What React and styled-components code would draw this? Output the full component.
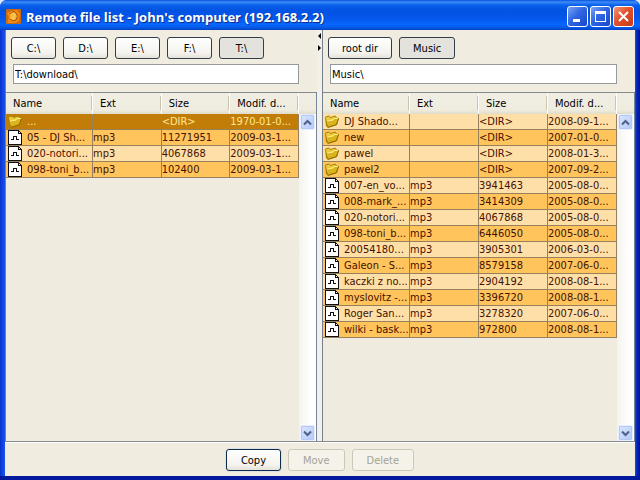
import React from 'react';
import styled, { createGlobalStyle, css } from 'styled-components';

const GlobalStyle = createGlobalStyle`
  * { box-sizing: border-box; }
  body {
    margin: 0;
    background: #dfe6f5;
    color: #000;
    font-family: "DejaVu Sans Condensed", "Noto Sans", sans-serif;
    font-size: 11px;
    line-height: 15px;
  }
  button, input { font: inherit; color: inherit; }
`;

const Window = styled.div`
  display: flex;
  flex-direction: column;
  min-height: 100vh;
  padding: 0 5px 4px;
  border-radius: 7px 7px 0 0;
  background: linear-gradient(90deg, #0a2fd0 0, #1450e4 4px, #1450e4 calc(100% - 5px), #0424b4 calc(100% - 3px), #00139c 100%);
  box-shadow: inset 0 -4px #02199c;
`;

const TitleBar = styled.header`
  display: flex;
  align-items: center;
  gap: 5px;
  height: 30px;
  margin: 0 -5px;
  padding: 3px 6px 0;
  border-radius: 7px 7px 0 0;
  background: linear-gradient(180deg, #0a4fdc 0, #3c8cf8 2px, #0a62ee 5px, #0253e2 10px, #0556ea 18px, #0668fd 25px, #0455df 28px, #0340c0 100%);
`;

const Title = styled.h1`
  flex: 1;
  min-width: 0;
  margin: 0;
  overflow: hidden;
  color: #fff;
  font-family: "Open Sans", "Noto Sans", sans-serif;
  font-size: 13px;
  font-weight: 700;
  line-height: 18px;
  white-space: nowrap;
  text-shadow: 1px 1px #0a2f94;
`;

const Caption = styled.div`
  display: flex;
  gap: 2px;
`;

const CaptionButton = styled.button`
  display: grid;
  place-items: center;
  width: 21px;
  height: 21px;
  padding: 0;
  border: 1px solid #fff;
  border-radius: 3px;
  background: ${(p) => (p.$close
    ? 'linear-gradient(135deg, #f0997c, #e0512c 45%, #c63a16)'
    : 'linear-gradient(135deg, #7ba4f4, #2f66e2 45%, #1748cc)')};
`;

const Panes = styled.main`
  flex: 1;
  display: grid;
  grid-template-columns: minmax(0, 312fr) 5px minmax(0, 313fr);
  background: #f0ede0;
  border-bottom: 1px solid #858b8c;
`;

const Pane = styled.section`
  display: flex;
  flex-direction: column;
  min-width: 0;
  border-left: 1px solid #74808c;
`;

const Splitter = styled.div`
  display: flex;
  flex-direction: column;
  gap: 6px;
  padding: 3px 1px 0;
  background: #f2f0e8;
`;

const Toolbar = styled.nav`
  display: flex;
  gap: 7px;
  padding: 7px 5px 5px;
`;

const Button = styled.button`
  height: 22px;
  min-width: 45px;
  padding: 0 13px;
  border: 1px solid #343e48;
  border-radius: 3px;
  background: linear-gradient(180deg, #fff, #f4f3ee 75%, #e4e1d6);
  text-align: center;
  white-space: nowrap;
  ${(p) => p.$pressed && css`background: #e3e2dd;`}
  ${(p) => p.$primary && css`border-color: #0c2c50; box-shadow: 0 0 0 1px #dfe2e0;`}
  &:disabled {
    border-color: #cbc8b8;
    background: #f5f3e9;
    color: #a5a295;
  }
`;

const PathInput = styled.input`
  height: 20px;
  margin: 0 18px 8px 7px;
  padding: 0 1px;
  border: 1px solid #93999c;
  border-radius: 0;
  background: #fff;
`;

const FileArea = styled.div`
  flex: 1;
  display: grid;
  grid-template-columns: minmax(0, 1fr) 17px;
  border-top: 1px solid #858b8c;
  border-right: 1px solid #74869c;
`;

const Listing = styled.div`
  background: #efecdf;
`;

const Table = styled.table`
  width: 100%;
  table-layout: fixed;
  border-collapse: separate;
  border-spacing: 0;
`;

const NameCol = styled.col`
  width: 87px;
`;

const HeadCell = styled.th`
  height: 21px;
  padding: 0 0 0 7px;
  overflow: hidden;
  border-right: 1px solid #fff;
  background:
    linear-gradient(#c9c5b4, #c9c5b4) right 3px / 1px 14px no-repeat padding-box,
    linear-gradient(180deg, #f0eee3 0, #efecdf 17px, #e0dccb 100%);
  font-weight: 400;
  text-align: left;
  white-space: nowrap;
`;

const Row = styled.tr`
  background: #ffdfa8;
  color: #461200;
  &:nth-child(even) { background: #ffc45c; }
  ${(p) => p.$selected && css`
    && { background: #c27d08; color: #ffe892; }
  `}
`;

const Cell = styled.td`
  height: 16px;
  padding: 0;
  overflow: hidden;
  border-right: 1px solid #96815c;
  border-bottom: 1px solid #96815c;
  white-space: nowrap;
`;

const FileName = styled.span`
  display: flex;
  align-items: center;
  gap: 5px;
  height: 15px;
  padding-left: 1px;
`;

const ScrollColumn = styled.div`
  display: flex;
  flex-direction: column;
`;

const ScrollCorner = styled.div`
  height: 21px;
  background: linear-gradient(180deg, #f0eee3 0, #efecdf 17px, #e0dccb 100%);
`;

const ScrollTrack = styled.div`
  flex: 1;
  display: flex;
  flex-direction: column;
  justify-content: space-between;
  padding: 0 1px;
  background: linear-gradient(90deg, #f4f3ee, #fff 70%);
`;

const ScrollButton = styled.button`
  display: grid;
  place-items: center;
  width: 15px;
  height: 16px;
  padding: 0;
  border: 1px solid #e6eeff;
  border-radius: 2px;
  background: linear-gradient(135deg, #dbe6ff, #b4c9f8);
  box-shadow: inset 0 0 0 1px #b4c8f4;
`;

const Footer = styled.footer`
  display: flex;
  justify-content: center;
  gap: 7px;
  height: 34px;
  padding-top: 6px;
  background: #f0ede0;
  border-top: 1px solid #fff;

  ${Button} { padding: 0 14px; }
`;

const AppIcon = () => (
  <svg width="15" height="15" viewBox="0 0 15 15" aria-hidden="true">
    <rect width="15" height="15" rx="1" fill="#c86a14" />
    <path d="M1 14L3 9L1 4L5 2L11 1L14 5L13 12L9 14Z" fill="#f28a10" />
    <path d="M4 5Q7 1 10 4Q13 7 10 11Q6 13 4 10" fill="#ffb42c" stroke="#a64c0c" />
    <path d="M5 6L8 4L9 7L6 9L9 10" fill="none" stroke="#f4d070" />
  </svg>
);

const FolderIcon = () => (
  <svg width="15" height="15" viewBox="0 0 15 15" aria-hidden="true">
    <path d="M1 3.5L1.5 2.5L5 1.5L6.5 3L11.5 1.5L12.5 3.5L15 4L13 11L4 14L2 12Z" fill="#a8820a" />
    <path d="M1.7 3.5L5 2.5L6.5 4L11.5 2.5L12 9L4 12Z" fill="#eacb3c" />
    <path d="M3.5 7L9 6L10 4.5L14.3 4.5L12.3 10.6L4.2 13.2Z" fill="#dcb41c" />
    <path d="M3.5 7L9 6L10 4.5H14" fill="none" stroke="#fff08c" />
    <path d="M4.2 13.2L12.4 10.6L14.4 4.6" fill="none" stroke="#8c6a00" />
  </svg>
);

const FileIcon = () => (
  <svg width="15" height="15" viewBox="0 0 15 15" shapeRendering="crispEdges" aria-hidden="true">
    <path d="M1 0H12V1H13V2H14V3H15V15H1Z" fill="#111" />
    <path d="M2 1H11V4H14V14H2Z" fill="#fff" />
    <path d="M12 2H13V3H12Z" fill="#fff" />
    <path d="M4 9H6V6H10V9H12V10H9V7H7V10H4Z" fill="#111" />
  </svg>
);

const Chevron = ({ down }) => (
  <svg width="9" height="7" viewBox="0 0 9 7" aria-hidden="true">
    <path d={down ? 'M1 1.5L4.5 5L8 1.5' : 'M1 5.5L4.5 2L8 5.5'} fill="none" stroke="#4d6185" strokeWidth="2" />
  </svg>
);

const SplitArrow = ({ right }) => (
  <svg width="3" height="6" viewBox="0 0 3 6" aria-hidden="true">
    <path d={right ? 'M0 0L3 3L0 6Z' : 'M3 0L0 3L3 6Z'} fill="#000" />
  </svg>
);

const localFiles = [
  ['...', null, '<DIR>', '1970-01-0...'],
  ['05 - DJ Sh...', 'mp3', '11271951', '2009-03-1...'],
  ['020-notori...', 'mp3', '4067868', '2009-03-1...'],
  ['098-toni_b...', 'mp3', '102400', '2009-03-1...'],
];

const remoteFiles = [
  ['DJ Shado...', null, '<DIR>', '2008-09-1...'],
  ['new', null, '<DIR>', '2007-01-0...'],
  ['pawel', null, '<DIR>', '2008-01-3...'],
  ['pawel2', null, '<DIR>', '2007-09-2...'],
  ['007-en_vo...', 'mp3', '3941463', '2005-08-0...'],
  ['008-mark_...', 'mp3', '3414309', '2005-08-0...'],
  ['020-notori...', 'mp3', '4067868', '2005-08-0...'],
  ['098-toni_b...', 'mp3', '6446050', '2005-08-0...'],
  ['20054180...', 'mp3', '3905301', '2006-03-0...'],
  ['Galeon - S...', 'mp3', '8579158', '2007-06-0...'],
  ['kaczki z no...', 'mp3', '2904192', '2008-08-1...'],
  ['myslovitz -...', 'mp3', '3396720', '2008-08-1...'],
  ['Roger San...', 'mp3', '3278320', '2007-06-0...'],
  ['wilki - bask...', 'mp3', '972800', '2008-08-1...'],
];

function FilePane({ label, places, current, path, files, selected }) {
  return (
    <Pane aria-label={label}>
      <Toolbar>
        {places.map((place) => (
          <Button key={place} type="button" $pressed={place === current} aria-pressed={place === current}>
            {place}
          </Button>
        ))}
      </Toolbar>
      <PathInput aria-label={`${label} path`} defaultValue={path} />
      <FileArea>
        <Listing>
          <Table>
            <colgroup>
              <NameCol />
              <col />
              <col />
              <col />
            </colgroup>
            <thead>
              <tr>
                {['Name', 'Ext', 'Size', 'Modif. d...'].map((title) => (
                  <HeadCell key={title} scope="col">{title}</HeadCell>
                ))}
              </tr>
            </thead>
            <tbody>
              {files.map(([name, ext, size, date]) => (
                <Row key={name} $selected={name === selected}>
                  <Cell>
                    <FileName>
                      {ext ? <FileIcon /> : <FolderIcon />}
                      {name}
                    </FileName>
                  </Cell>
                  <Cell>{ext}</Cell>
                  <Cell>{size}</Cell>
                  <Cell>{date}</Cell>
                </Row>
              ))}
            </tbody>
          </Table>
        </Listing>
        <ScrollColumn>
          <ScrollCorner />
          <ScrollTrack>
            <ScrollButton type="button" aria-label="Scroll up"><Chevron /></ScrollButton>
            <ScrollButton type="button" aria-label="Scroll down"><Chevron down /></ScrollButton>
          </ScrollTrack>
        </ScrollColumn>
      </FileArea>
    </Pane>
  );
}

export default function App() {
  return (
    <>
      <GlobalStyle />
      <Window>
        <TitleBar>
          <AppIcon />
          <Title>Remote file list - John's computer (192.168.2.2)</Title>
          <Caption>
            <CaptionButton type="button" aria-label="Minimize">
              <svg width="13" height="13" viewBox="0 0 13 13"><path d="M2 9H9V12H2Z" fill="#fff" /></svg>
            </CaptionButton>
            <CaptionButton type="button" aria-label="Maximize">
              <svg width="13" height="13" viewBox="0 0 13 13"><path d="M1 1H12V12H1ZM2 4V11H11V4Z" fill="#fff" fillRule="evenodd" /></svg>
            </CaptionButton>
            <CaptionButton type="button" aria-label="Close" $close>
              <svg width="13" height="13" viewBox="0 0 13 13"><path d="M2 2L11 11M11 2L2 11" stroke="#fff" strokeWidth="2" /></svg>
            </CaptionButton>
          </Caption>
        </TitleBar>
        <Panes>
          <FilePane
            label="Local files"
            places={['C:\\', 'D:\\', 'E:\\', 'F:\\', 'T:\\']}
            current={'T:\\'}
            path={'T:\\download\\'}
            files={localFiles}
            selected="..."
          />
          <Splitter>
            <SplitArrow />
            <SplitArrow right />
          </Splitter>
          <FilePane
            label="Remote files"
            places={['root dir', 'Music']}
            current="Music"
            path={'Music\\'}
            files={remoteFiles}
          />
        </Panes>
        <Footer>
          <Button type="button" $primary>Copy</Button>
          <Button type="button" disabled>Move</Button>
          <Button type="button" disabled>Delete</Button>
        </Footer>
      </Window>
    </>
  );
}
